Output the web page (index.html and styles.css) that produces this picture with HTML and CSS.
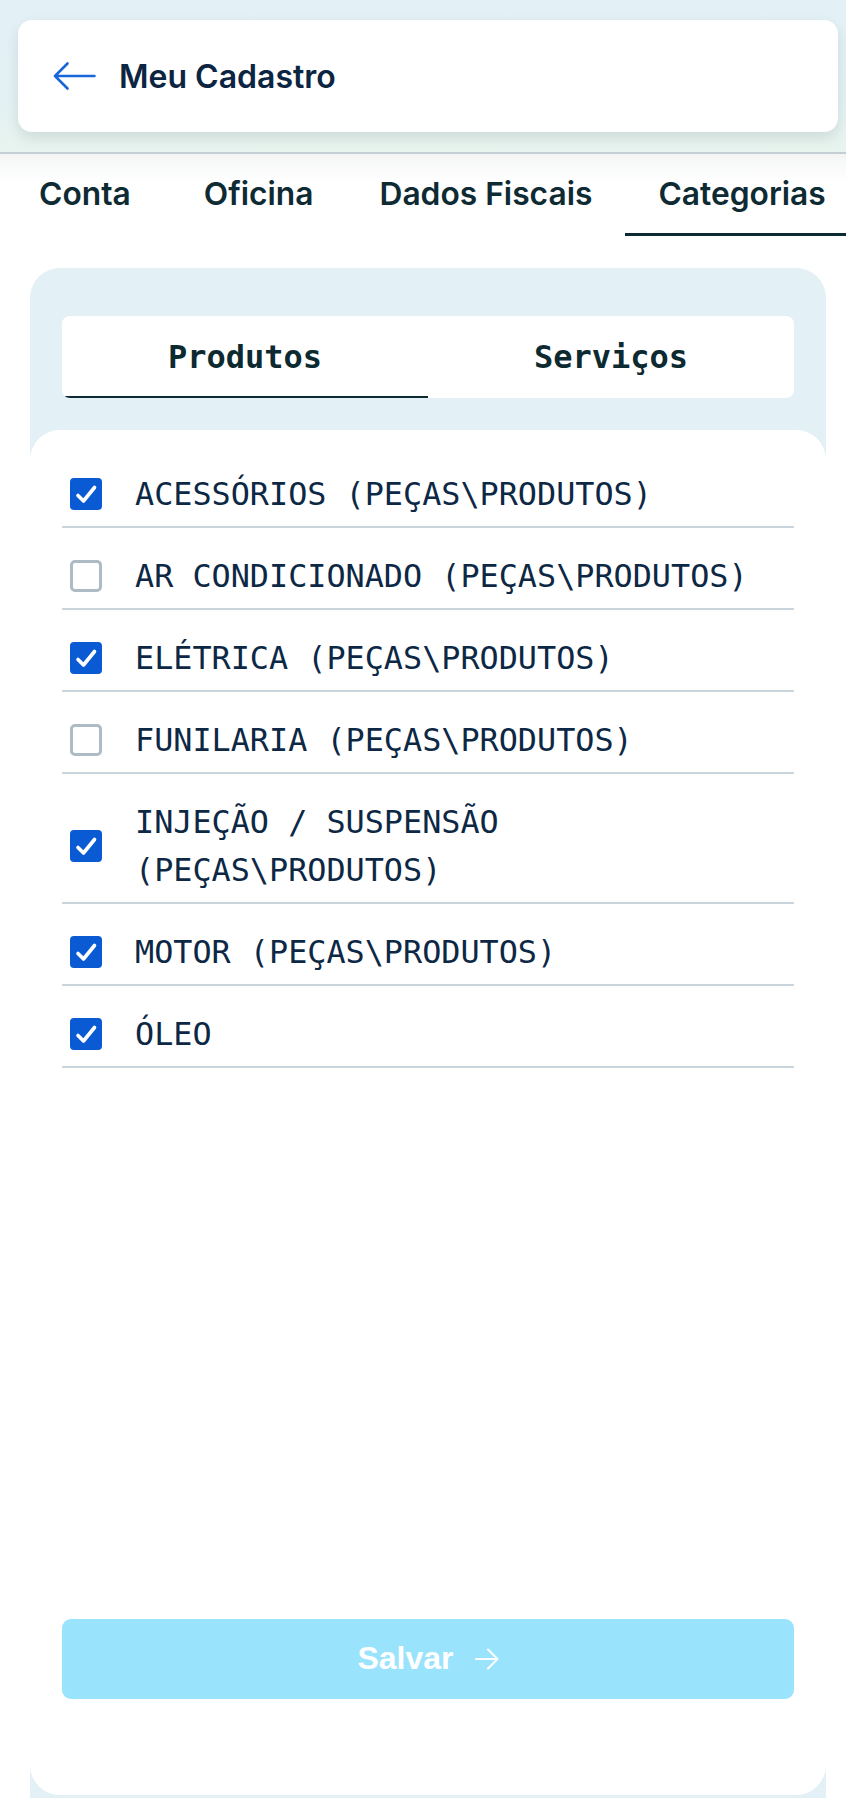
FILE: index.html
```html
<!DOCTYPE html>
<html lang="pt-BR">
<head>
	<title>Meu Cadastro</title>
	<meta charset="utf-8" />
	<meta name="viewport" content="width=device-width, initial-scale=1.0" />
	<link rel="stylesheet" href="styles.css">
</head>
<body>
<header class="top">
	<div class="title-card">
		<svg class="back" width="43" height="28" viewBox="0 0 43 28">
			<path d="M2 14 H41.5 M14.5 1.5 L2 14 L14.5 26.5" fill="none" stroke="#1866d9" stroke-width="2.6" stroke-linecap="round" stroke-linejoin="round"/>
		</svg>
		<h1>Meu Cadastro</h1>
	</div>
</header>

<nav class="tabs">
	<a class="tab">Conta</a>
	<a class="tab">Oficina</a>
	<a class="tab">Dados Fiscais</a>
	<a class="tab active">Categorias</a>
</nav>

<section class="panel">
	<div class="subtabs-wrap">
		<div class="subtabs">
			<a class="subtab active">Produtos</a>
			<a class="subtab">Serviços</a>
		</div>
	</div>

	<div class="list-card">
		<ul class="categories">
			<li>
				<span class="box checked"><svg width="32" height="32" viewBox="0 0 32 32"><path d="M8 17.5 L13.5 23 L24.5 9.5" /></svg></span>
				<span class="label">ACESSÓRIOS (PEÇAS\PRODUTOS)</span>
			</li>
			<li>
				<span class="box"></span>
				<span class="label">AR CONDICIONADO (PEÇAS\PRODUTOS)</span>
			</li>
			<li>
				<span class="box checked"><svg width="32" height="32" viewBox="0 0 32 32"><path d="M8 17.5 L13.5 23 L24.5 9.5" /></svg></span>
				<span class="label">ELÉTRICA (PEÇAS\PRODUTOS)</span>
			</li>
			<li>
				<span class="box"></span>
				<span class="label">FUNILARIA (PEÇAS\PRODUTOS)</span>
			</li>
			<li>
				<span class="box checked"><svg width="32" height="32" viewBox="0 0 32 32"><path d="M8 17.5 L13.5 23 L24.5 9.5" /></svg></span>
				<span class="label">INJEÇÃO / SUSPENSÃO<br>(PEÇAS\PRODUTOS)</span>
			</li>
			<li>
				<span class="box checked"><svg width="32" height="32" viewBox="0 0 32 32"><path d="M8 17.5 L13.5 23 L24.5 9.5" /></svg></span>
				<span class="label">MOTOR (PEÇAS\PRODUTOS)</span>
			</li>
			<li>
				<span class="box checked"><svg width="32" height="32" viewBox="0 0 32 32"><path d="M8 17.5 L13.5 23 L24.5 9.5" /></svg></span>
				<span class="label">ÓLEO</span>
			</li>
		</ul>

		<button class="save" type="button">
			Salvar
			<svg width="24" height="22" viewBox="0 0 24 22">
				<path d="M1 11 H22.5 M13 1.5 L22.5 11 L13 20.5" fill="none" stroke="#fff" stroke-width="2" stroke-linecap="round" stroke-linejoin="round"/>
			</svg>
		</button>
	</div>
</section>
</body>
</html>
```

FILE: styles.css
```css
body {
	margin: 0;
	padding: 0;
	width: 846px;
	overflow: hidden;
	background: #fff;
	font-family: Inter, "Noto Sans", sans-serif;
}

/* top bar */
.top {
	padding: 20px 8px 20px 18px;
	background: linear-gradient(to bottom, #e3f1f7 0%, #e4f1f5 60%, #e8f4ee 100%);
	border-bottom: 2px solid #c3cfd5;
}
.title-card {
	height: 112px;
	box-sizing: border-box;
	padding: 0 35px;
	display: flex;
	align-items: center;
	gap: 23px;
	background: #fff;
	border-radius: 14px;
	box-shadow: 0 6px 14px rgba(40, 60, 60, 0.13);
}
.title-card h1 {
	margin: 0;
	font-size: 32px;
	font-weight: 600;
	color: #0c2542;
}

/* main tabs */
.tabs {
	display: flex;
	padding-left: 6px;
	white-space: nowrap;
	overflow: hidden;
	background: linear-gradient(to bottom, #f4f5f5 0px, #fff 28px);
}
.tab {
	padding: 20px 33px 20px;
	font-size: 31.75px;
	font-weight: 600;
	color: #0e2a33;
	border-bottom: 3px solid transparent;
}
.tab:first-child {
	margin-right: 7px;
}
.tab.active {
	border-bottom-color: #0c2a33;
}

/* categories panel */
.panel {
	margin: 32px 20px 0 30px;
	padding-bottom: 30px;
	background: #e3f0f6;
	border-radius: 30px;
}
.subtabs-wrap {
	padding: 48px 32px 32px;
}
.subtabs {
	display: flex;
	background: #fff;
	border-radius: 8px;
	overflow: hidden;
}
.subtab {
	flex: 1;
	text-align: center;
	padding: 22px 0 19.5px;
	font: bold 32px "DejaVu Sans Mono", monospace;
	color: #0c2a30;
	border-bottom: 2px solid transparent;
}
.subtab.active {
	border-bottom-color: #0c2a31;
}

.list-card {
	height: 1365px;
	box-sizing: border-box;
	padding: 16px 32px 96px;
	display: flex;
	flex-direction: column;
	background: #fff;
	border-radius: 30px;
}
.categories {
	list-style: none;
	margin: 0;
	padding: 0;
}
.categories li {
	display: flex;
	align-items: center;
	padding: 24px 0 8px;
	border-bottom: 2px solid #c9d5db;
}
.box {
	flex: none;
	width: 32px;
	height: 32px;
	box-sizing: border-box;
	margin: 0 33px 0 8px;
	border: 3.5px solid #adbcc4;
	border-radius: 5px;
}
.box.checked {
	border: none;
	border-radius: 4px;
	background: #0a5ad4;
}
.box svg {
	display: block;
}
.box svg path {
	fill: none;
	stroke: #fff;
	stroke-width: 3.6;
	stroke-linecap: round;
	stroke-linejoin: round;
}
.label {
	font: 31.8px/48px "DejaVu Sans Mono", monospace;
	color: #0d2845;
}

.save {
	margin-top: auto;
	height: 80px;
	display: flex;
	align-items: center;
	justify-content: center;
	gap: 21px;
	border: none;
	border-radius: 9px;
	background: #9ae3fd;
	color: #fff;
	font: bold 32px "Liberation Sans", Arial, sans-serif;
}
```
